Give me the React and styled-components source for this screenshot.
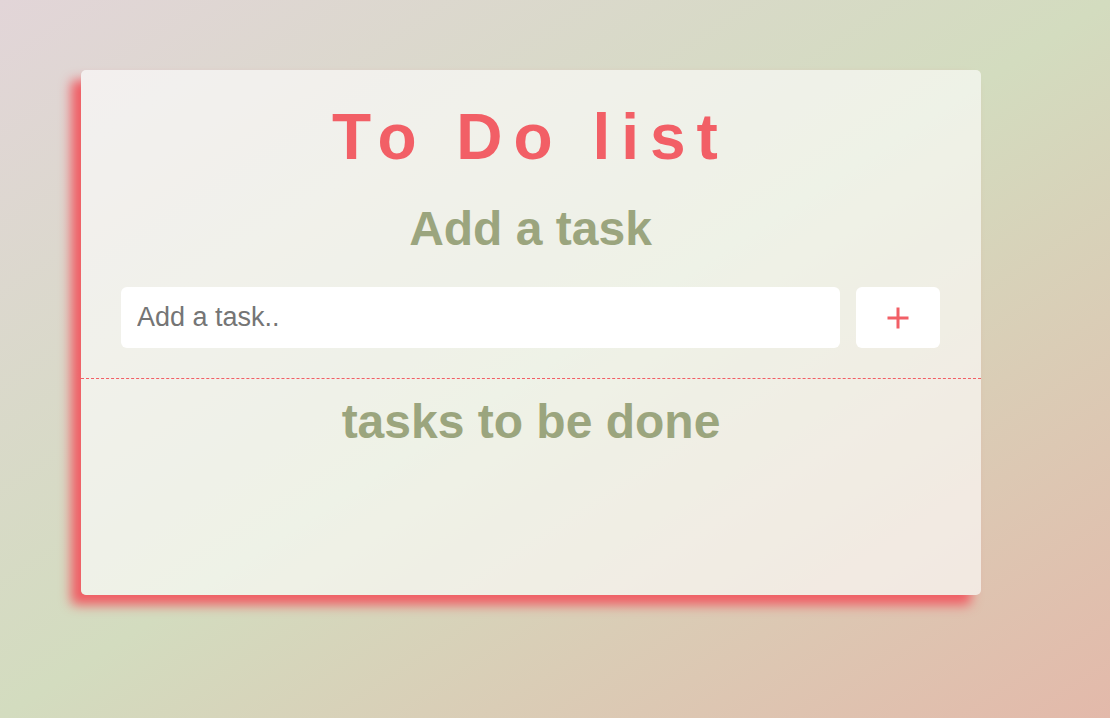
import React, { useState } from "react";
import styled, { createGlobalStyle } from "styled-components";

const GlobalStyle = createGlobalStyle`
  html, body {
    margin: 0;
    padding: 0;
    min-height: 100%;
  }
  body {
    min-height: 100vh;
    font-family: "Liberation Sans", Arial, sans-serif;
    background: linear-gradient(to bottom right, #e2d5d8 0%, #d3dcbf 50%, #e3b9aa 100%);
    background-attachment: fixed;
  }
`;

const Page = styled.div`
  display: flex;
  padding: 70px 0 0 81px;
  min-height: 718px;
  box-sizing: border-box;
`;

const Card = styled.div`
  width: 900px;
  height: 525px;
  box-sizing: border-box;
  background: rgba(255, 255, 255, 0.62);
  border-radius: 5px;
  box-shadow: -10px 10px 12px #f05d64;
  display: flex;
  flex-direction: column;
`;

const TopSection = styled.section`
  display: flex;
  flex-direction: column;
  align-items: stretch;
  padding: 30px 41px 30px 40px;
  border-bottom: 1px dashed #f25f66;
`;

const Title = styled.h1`
  margin: 0;
  font-size: 64px;
  line-height: 74px;
  font-weight: 700;
  color: #f25f66;
  letter-spacing: 11px;
  text-align: center;
`;

const Heading = styled.h2`
  margin: ${(p) => p.$top}px 0 0;
  font-size: 48px;
  line-height: 55px;
  font-weight: 700;
  color: #9ba57e;
  text-align: center;
`;

const InputRow = styled.form`
  display: flex;
  gap: 16px;
  margin-top: 31px;
  height: 61px;
`;

const TaskInput = styled.input`
  flex: 1;
  height: 61px;
  box-sizing: border-box;
  border: none;
  outline: none;
  border-radius: 6px;
  background: #fff;
  padding: 0 16px;
  font-family: "Liberation Sans", Arial, sans-serif;
  font-size: 27px;
  color: #333;
  &::placeholder {
    color: #757575;
  }
`;

const AddButton = styled.button`
  width: 84px;
  height: 61px;
  border: none;
  border-radius: 6px;
  background: #fff;
  display: flex;
  align-items: center;
  justify-content: center;
  cursor: pointer;
  padding: 0;
`;

const BottomSection = styled.section`
  display: flex;
  flex-direction: column;
  padding: 0 40px;
`;

function PlusIcon() {
  return (
    <svg width="22" height="22" viewBox="0 0 22 22" aria-hidden="true">
      <path d="M11 0.5 V21.5 M0.5 11 H21.5" stroke="#f25f66" strokeWidth="3" fill="none" />
    </svg>
  );
}

export default function App() {
  const [value, setValue] = useState("");
  return (
    <>
      <GlobalStyle />
      <Page>
        <Card>
          <TopSection>
            <Title>To Do list</Title>
            <Heading $top={27}>Add a task</Heading>
            <InputRow onSubmit={(e) => e.preventDefault()}>
              <TaskInput
                placeholder="Add a task.."
                value={value}
                onChange={(e) => setValue(e.target.value)}
              />
              <AddButton type="submit" aria-label="Add">
                <PlusIcon />
              </AddButton>
            </InputRow>
          </TopSection>
          <BottomSection>
            <Heading $top={15}>tasks to be done</Heading>
          </BottomSection>
        </Card>
      </Page>
    </>
  );
}
